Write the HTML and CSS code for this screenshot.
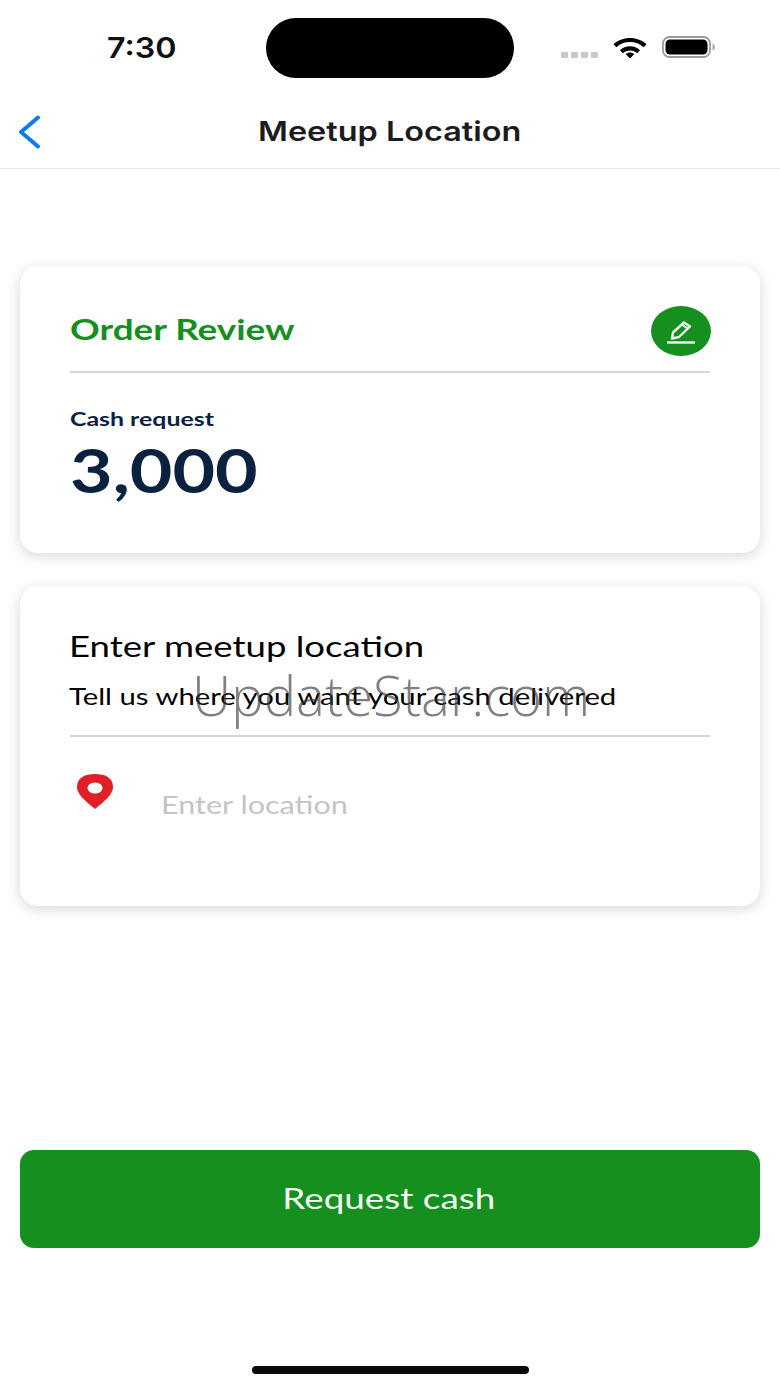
FILE: index.html
```html
<!DOCTYPE html>
<html lang="en">
<head>
<meta charset="utf-8">
<title>Meetup Location</title>
<link rel="stylesheet" href="styles.css">
</head>
<body>
<div class="screen">
  <header class="status">
    <span class="time wide">7:30</span>
    <div class="island"></div>
    <div class="status-icons">
      <div class="dots"><i></i><i></i><i></i><i></i></div>
      <svg class="wifi" width="34" height="22" viewBox="0 0 34 22"><path d="M.5 8.200C4.800 4.300 10.600 2 17 2s12.200 2.300 16.500 6.200l-2.900 3C27 7.900 22.200 6 17 6S7 7.900 3.400 11.200z"/><path d="M7 14.300C9.600 11.800 13.100 10.300 17 10.300s7.400 1.500 10 4l-2.900 2.900C22.200 15.400 19.700 14.400 17 14.400s-5.200 1-7.100 2.800z"/><path d="M12.700 19.500c1.100-1 2.600-1.600 4.300-1.600s3.200.6 4.300 1.600L17 24z" transform="translate(0 -1.500)"/></svg>
      <svg class="battery" width="54" height="22" viewBox="0 0 54 22"><rect x="1" y="1" width="47" height="20" rx="6.500" fill="none" stroke="#9a9a9a" stroke-width="1.800"/><rect x="3.500" y="3.500" width="42" height="15" rx="4.500" fill="#000"/><path d="M50.500 7.500c1.500.5 2.500 2 2.500 3.500s-1 3-2.500 3.500z" fill="#a8a8a8"/></svg>
    </div>
  </header>
  <nav class="nav">
    <svg class="back" width="26" height="34" viewBox="0 0 26 34"><path d="M22 2.500 5 17l17 14.500" fill="none" stroke="#0a7cf0" stroke-width="4" stroke-linecap="round" stroke-linejoin="round"/></svg>
    <h1 class="nav-title wide">Meetup Location</h1>
  </nav>
  <main class="main">
    <section class="card card-order">
      <div class="card-head">
        <h2 class="order-title wide">Order Review</h2>
        <div class="edit">
          <svg width="30" height="28" viewBox="0 0 30 28"><path d="M7 15.500 18 5.500l6 4L13 20l-7 1.500z" fill="none" stroke="#eef7ee" stroke-width="2.400" stroke-linejoin="round"/><path d="M16 7.500l5.500 4" stroke="#eef7ee" stroke-width="2"/><path d="M1 25.500h28" stroke="#eef7ee" stroke-width="2.400"/></svg>
        </div>
      </div>
      <div class="label wide">Cash request</div>
      <div class="amount wide">3,000</div>
    </section>
    <section class="card card-loc">
      <h2 class="loc-title wide">Enter meetup location</h2>
      <p class="loc-sub wide">Tell us where you want your cash delivered</p>
      <div class="input-row">
        <svg class="pin" width="38" height="38" viewBox="0 0 38 38"><path d="M19 1C9 1 1 4.500 1 14c0 7 8 14 18 22C29 28 37 21 37 14 37 4.500 29 1 19 1z" fill="#df2027"/><ellipse cx="19" cy="15" rx="7.500" ry="5.500" fill="#fff"/></svg>
        <span class="placeholder wide">Enter location</span>
      </div>
    </section>
    <button class="cta" type="button"><span class="wide">Request cash</span></button>
  </main>
  <div class="home"></div>
  <div class="watermark">UpdateStar.com</div>
</div>
</body>
</html>
```

FILE: styles.css
```css
* { box-sizing: border-box; }
html, body { margin: 0; background: #fff; }
.screen {
  position: relative;
  width: 780px;
  height: 1387px;
  overflow: hidden;
  display: flex;
  flex-direction: column;
  font-family: "Lato", "Liberation Sans", sans-serif;
  background: #fff;
}
.wide { display: inline-block; transform-origin: left center; white-space: nowrap; }

.status { height: 100px; flex: none; display: flex; padding: 19px 64px 0 107px; position: relative; }
.time { font: 600 29px/58px "Inter", sans-serif; color: #111; height: 58px; transform: scaleX(1.11); }
.island { position: absolute; left: 266px; top: 18px; width: 248px; height: 60px; border-radius: 30px; background: #000; }
.status-icons { margin-left: auto; display: flex; align-items: flex-start; margin-top: -1px; }
.dots { display: flex; gap: 3px; margin-top: 34px; margin-right: 15px; }
.dots i { width: 7px; height: 6px; background: #c9c9c9; border-radius: 1px; }
.wifi { margin-top: 18px; margin-right: 15px; }
.battery { margin-top: 18px; }

.nav { height: 69px; flex: none; border-bottom: 1.5px solid #e6e6e6; display: flex; align-items: center; justify-content: center; position: relative; padding-bottom: 4px; }
.back { position: absolute; left: 16px; top: 15px; }
.nav-title { margin: 0; font: 600 27px/36px "Inter", sans-serif; color: #1c1c1e; transform-origin: center; transform: scaleX(1.2); }

.main { flex: 1; display: flex; flex-direction: column; padding: 97px 20px 0; }
.card { background: #fff; border-radius: 18px; box-shadow: 0 3px 14px rgba(0,0,0,.16); padding: 0 50px; }
.card-order { height: 287px; margin-bottom: 33px; }
.card-head { height: 107px; padding-top: 40px; border-bottom: 2px solid #d6d6d6; display: flex; justify-content: space-between; align-items: flex-start; }
.order-title { margin: -1px 0 0; font-size: 29px; line-height: 48px; font-weight: 700; color: #158f1e; transform: scaleX(1.27); }
.edit { width: 60px; height: 50px; margin-right: -1px; border-radius: 50%; background: #158f1e; display: flex; align-items: center; justify-content: center; }
.label { display: block; margin: 32px 0 0; font-size: 19px; line-height: 28px; font-weight: 700; color: #0a2240; transform: scaleX(1.31); }
.amount { display: block; margin: 2px 0 0; font-size: 61px; line-height: 70px; font-weight: 700; color: #0a2240; transform: scaleX(1.205); }

.card-loc { height: 320px; padding-top: 40px; }
.loc-title { display: block; margin: 0 0 0 -1px; font-size: 28px; line-height: 40px; font-weight: 400; color: #000; transform: scaleX(1.305); }
.loc-sub { display: block; margin: 14px 0 0 -1px; font-size: 23.500px; line-height: 32px; font-weight: 400; color: #000; transform: scaleX(1.247); }
.input-row { margin-top: 23px; padding-top: 36px; border-top: 2px solid #d6d6d6; display: flex; align-items: flex-start; }
.pin { margin-left: 6px; flex: none; }
.placeholder { margin-left: 47px; margin-top: 14px; font-size: 25px; line-height: 34px; color: #c4c4c4; transform: scaleX(1.223); }

.cta { margin-top: 244px; height: 98px; border: 0; border-radius: 14px; background: #158f1e; color: #f4fbf4; font-family: inherit; font-size: 29px; display: flex; align-items: center; justify-content: center; padding: 0 2px 4px 0; }
.cta .wide { transform-origin: center; transform: scaleX(1.27); }

.home { position: absolute; left: 252px; top: 1366px; width: 277px; height: 8px; border-radius: 4px; background: #0a0a0a; }
.watermark { position: absolute; left: 192px; top: 655px; font: 300 54.500px/80px "Open Sans", sans-serif; color: rgba(60,60,60,.65); white-space: nowrap; }
```
